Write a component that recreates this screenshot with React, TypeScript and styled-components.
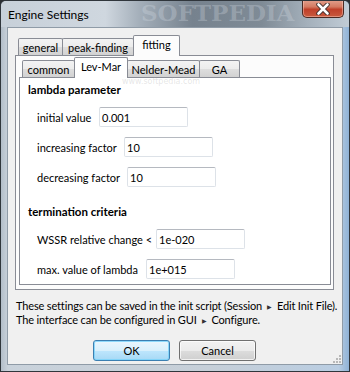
import React from "react";
import styled, { createGlobalStyle } from "styled-components";

const GlobalStyle = createGlobalStyle`
  html, body {
    margin: 0;
    padding: 0;
    background: #2b2f33;
  }
  body {
    font-family: Lato, "Noto Sans", sans-serif;
    font-size: 11px;
    color: #000;
  }
`;

const Window = styled.div`
  position: relative;
  width: 350px;
  height: 372px;
  box-sizing: border-box;
  display: flex;
  flex-direction: column;
  border: 1px solid #30363c;
  border-radius: 6px 6px 0 0;
  background: linear-gradient(90deg, #b3bec9 0%, #c9d2db 2%, #c6cfd8 60%, #b9cde2 97%, #8fb2d6 100%);
  overflow: hidden;
`;

const TitleBar = styled.div`
  position: relative;
  height: 26px;
  display: flex;
  align-items: flex-start;
  background: linear-gradient(90deg, #c7d0d9 0%, #cfd7df 30%, #a3aeb9 40%, #76828e 55%, #7f8b96 75%, #a4b0bb 88%, #c1ccd6 100%);
`;

const Title = styled.span`
  position: relative;
  z-index: 1;
  padding: 6px 0 0 7px;
  line-height: 15px;
  font-size: 12px;
  color: #000;
`;

const Watermark = styled.span`
  position: absolute;
  left: 140px;
  top: -2px;
  font-family: "DejaVu Serif", serif;
  font-weight: bold;
  font-size: 23px;
  color: rgba(215, 222, 230, 0.3);
  pointer-events: none;
`;

const SmallMark = styled.span`
  position: absolute;
  left: 121px;
  top: 76px;
  font-family: "DejaVu Sans", sans-serif;
  font-size: 8px;
  color: rgba(170, 170, 170, 0.3);
  pointer-events: none;
  z-index: 5;
`;

const CloseButton = styled.div`
  position: relative;
  z-index: 1;
  margin: -1px 5px 0 auto;
  width: 42px;
  height: 18px;
  box-sizing: border-box;
  display: flex;
  align-items: center;
  justify-content: center;
  border: 1px solid #4a2a24;
  border-top: none;
  border-radius: 0 0 5px 5px;
  background: linear-gradient(#e3a08e 0%, #d47a62 40%, #c0402a 55%, #c85a3e 100%);
  box-shadow: inset 0 0 0 1px rgba(255, 210, 200, 0.45);
`;

const Client = styled.div`
  position: relative;
  flex: 1;
  margin: 0 6px 6px 6px;
  display: flex;
  flex-direction: column;
  padding: 7px 8px 0 7px;
  background: #f0f0f0;
  border: 1px solid #8f9ba7;
`;

const TabWidget = styled.div<{ $height?: number }>`
  display: flex;
  flex-direction: column;
  height: ${(p) => (p.$height ? `${p.$height}px` : "auto")};
  flex: ${(p) => (p.$height ? "none" : "1")};
`;

const TabBar = styled.div<{ $indent: number }>`
  display: flex;
  align-items: flex-end;
  height: 20px;
  padding-left: ${(p) => p.$indent}px;
  position: relative;
  z-index: 1;
`;

const Tab = styled.div<{ $active?: boolean; $bg: string; $w: number }>`
  box-sizing: border-box;
  width: ${(p) => p.$w}px;
  height: ${(p) => (p.$active ? "21px" : "17px")};
  margin: ${(p) => (p.$active ? "0 0 -1px -1px" : "0 0 0 -1px")};
  padding-bottom: ${(p) => (p.$active ? "4px" : "0")};
  display: flex;
  align-items: center;
  justify-content: center;
  border: 1px solid #898c95;
  border-bottom: none;
  border-radius: 2px 2px 0 0;
  background: ${(p) =>
    p.$active ? p.$bg : "linear-gradient(#f3f3f3 0%, #ececec 50%, #dedede 50%, #d2d2d2 100%)"};
  white-space: nowrap;
  position: relative;
  z-index: ${(p) => (p.$active ? 2 : 0)};
  &:first-child {
    margin-left: 0;
  }
`;

const Pane = styled.div<{ $bg: string; $pad: string }>`
  flex: 1;
  display: flex;
  flex-direction: column;
  box-sizing: border-box;
  border: 1px solid #898c95;
  background: ${(p) => p.$bg};
  padding: ${(p) => p.$pad};
`;

const Section = styled.div<{ $gap: number }>`
  display: flex;
  flex-direction: column;
  margin-top: ${(p) => p.$gap}px;
`;

const SectionTitle = styled.div`
  font-weight: bold;
  font-size: 11.5px;
  line-height: 16px;
  margin-bottom: 9px;
`;

const Rows = styled.div`
  display: flex;
  flex-direction: column;
  gap: 10px;
  padding-left: 9px;
`;

const Row = styled.div`
  display: flex;
  align-items: center;
  height: 20px;
`;

const Label = styled.span<{ $width: number }>`
  width: ${(p) => p.$width}px;
  flex: none;
  white-space: nowrap;
`;

const Field = styled.div`
  box-sizing: border-box;
  width: 89px;
  height: 20px;
  padding: 0 2px;
  display: flex;
  align-items: center;
  background: #fff;
  border: 1px solid #dde2e8;
  border-top-color: #b5b9c0;
  border-radius: 2px;
`;

const Note = styled.div`
  margin-top: 9px;
  line-height: 13px;
  white-space: nowrap;
  padding-left: 1px;
  letter-spacing: -0.15px;
`;

const Arrow = styled.span`
  font-size: 6px;
  padding: 0 5px;
  vertical-align: 1px;
  color: #333;
`;

const ButtonRow = styled.div`
  display: flex;
  justify-content: center;
  gap: 9px;
  margin-top: 13px;
`;

const Button = styled.div<{ $default?: boolean }>`
  box-sizing: border-box;
  width: 77px;
  height: 21px;
  display: flex;
  align-items: center;
  justify-content: center;
  border-radius: 3px;
  border: 1px solid ${(p) => (p.$default ? "#3c7fb1" : "#707070")};
  background: ${(p) =>
    p.$default
      ? "linear-gradient(#eaf6fd 0%, #d9f0fc 50%, #bee6fd 50%, #a7d9f5 100%)"
      : "linear-gradient(#f2f2f2 0%, #ebebeb 50%, #dddddd 50%, #cfcfcf 100%)"};
  box-shadow: inset 0 0 0 1px ${(p) => (p.$default ? "rgba(120,210,250,0.8)" : "rgba(255,255,255,0.7)")};
`;

const Grip = styled.svg`
  position: absolute;
  right: 1px;
  bottom: 1px;
`;

const lambdaRows = [
  { label: "initial value", width: 62, value: "0.001" },
  { label: "increasing factor", width: 87, value: "10" },
  { label: "decreasing factor", width: 90, value: "10" },
];

const stopRows = [
  { label: "WSSR relative change <", width: 119, value: "1e-020" },
  { label: "max. value of lambda", width: 109, value: "1e+015" },
];

export default function App() {
  return (
    <>
      <GlobalStyle />
      <Window>
        <TitleBar>
          <Title>Engine Settings</Title>
          <Watermark>SOFTPEDIA</Watermark>
          <CloseButton>
            <svg width="14" height="12" viewBox="0 0 14 12">
              <path
                d="M2.5 1.5 L11.5 10.5 M11.5 1.5 L2.5 10.5"
                stroke="#3a2a28"
                strokeWidth="4.4"
                strokeLinecap="round"
              />
              <path
                d="M2.5 1.5 L11.5 10.5 M11.5 1.5 L2.5 10.5"
                stroke="#ffffff"
                strokeWidth="2.6"
                strokeLinecap="round"
              />
            </svg>
          </CloseButton>
        </TitleBar>
        <SmallMark>www.softpedia.com</SmallMark>
        <Client>
          <TabWidget $height={255}>
            <TabBar $indent={3}>
              <Tab $bg="#fcfcfc" $w={45}>general</Tab>
              <Tab $bg="#fcfcfc" $w={72}>peak-finding</Tab>
              <Tab $bg="#fcfcfc" $w={47} $active>fitting</Tab>
            </TabBar>
            <Pane $bg="#fcfcfc" $pad="1px 2px 4px 3px">
              <TabWidget>
                <TabBar $indent={3}>
                  <Tab $bg="#ffffff" $w={53}>common</Tab>
                  <Tab $bg="#ffffff" $w={54} $active>Lev-Mar</Tab>
                  <Tab $bg="#ffffff" $w={73}>Nelder-Mead</Tab>
                  <Tab $bg="#ffffff" $w={41}>GA</Tab>
                </TabBar>
                <Pane $bg="#ffffff" $pad="4px 8px 0 8px">
                  <Section $gap={0}>
                    <SectionTitle>lambda parameter</SectionTitle>
                    <Rows>
                      {lambdaRows.map((r) => (
                        <Row key={r.label}>
                          <Label $width={r.width}>{r.label}</Label>
                          <Field>{r.value}</Field>
                        </Row>
                      ))}
                    </Rows>
                  </Section>
                  <Section $gap={17}>
                    <SectionTitle>termination criteria</SectionTitle>
                    <Rows>
                      {stopRows.map((r) => (
                        <Row key={r.label}>
                          <Label $width={r.width}>{r.label}</Label>
                          <Field>{r.value}</Field>
                        </Row>
                      ))}
                    </Rows>
                  </Section>
                </Pane>
              </TabWidget>
            </Pane>
          </TabWidget>
          <Note>
            These settings can be saved in the init script (Session<Arrow>▶</Arrow>Edit Init File).
            <br />
            The interface can be configured in GUI<Arrow>▶</Arrow>Configure.
          </Note>
          <ButtonRow>
            <Button $default>OK</Button>
            <Button>Cancel</Button>
          </ButtonRow>
          <Grip width="8" height="8" viewBox="0 0 8 8">
            <g fill="#b8b8b8">
              <rect x="6" y="0" width="2" height="2" />
              <rect x="3" y="3" width="2" height="2" />
              <rect x="6" y="3" width="2" height="2" />
              <rect x="0" y="6" width="2" height="2" />
              <rect x="3" y="6" width="2" height="2" />
              <rect x="6" y="6" width="2" height="2" />
            </g>
          </Grip>
        </Client>
      </Window>
    </>
  );
}
